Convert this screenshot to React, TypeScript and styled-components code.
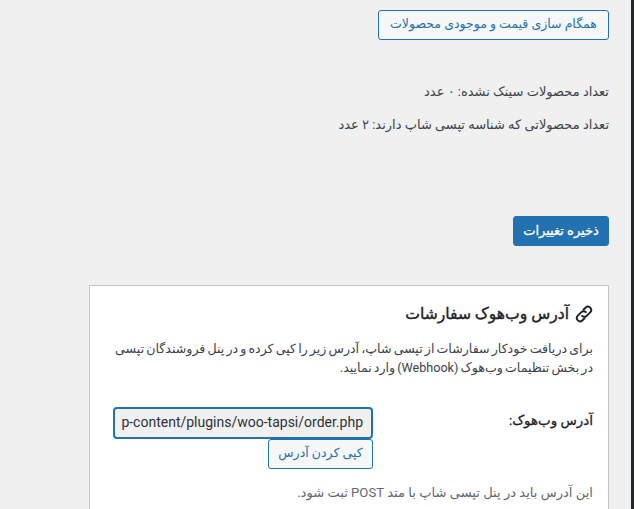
import { createGlobalStyle } from 'styled-components';
import styled from 'styled-components';

const GlobalStyle = createGlobalStyle`
  html, body {
    margin: 0;
    padding: 0;
    height: 100%;
    overflow: hidden;
    background: #f0f0f1;
  }
  body {
    font-family: Roboto, "Noto Sans", "DejaVu Sans", sans-serif;
    font-size: 13px;
    color: #3c434a;
  }
`;

const Page = styled.div`
  display: flex;
  width: 634px;
  height: 509px;
  overflow: hidden;
`;

const Content = styled.main`
  flex: 1;
  direction: rtl;
  padding: 10px 22px 0 0;
  display: flex;
  flex-direction: column;
  align-items: flex-start;
`;

const Edge = styled.div`
  width: 3px;
  background: #23282b;
`;

const OutlineButton = styled.button<{ $width: number }>`
  flex: none;
  width: ${props => props.$width}px;
  height: 30px;
  padding: 0 0 2px;
  font: inherit;
  font-size: 12.5px;
  line-height: 1;
  color: #2271b1;
  background: #f6f7f7;
  border: 1px solid #2271b1;
  border-radius: 3px;
`;

const StatLine = styled.p`
  margin: 0 0 14px;
  font-size: 13px;
  line-height: 19px;
  color: #3c434a;
`;

const Stats = styled.div`
  margin-top: 42px;
`;

const SaveButton = styled.button`
  margin-top: 68px;
  width: 96px;
  height: 30px;
  padding: 0 0 2px;
  font: inherit;
  -webkit-text-stroke: 0.3px #fff;
  color: #fff;
  background: #2271b1;
  border: 1px solid #2271b1;
  border-radius: 3px;
`;

const Card = styled.section`
  box-sizing: border-box;
  margin-top: 39px;
  width: 520px;
  flex: 1;
  padding: 18px 15px 0 23px;
  background: #fff;
  border: 1px solid #c3c4c7;
  border-bottom: 0;
`;

const CardTitle = styled.h2`
  display: flex;
  align-items: center;
  gap: 6px;
  margin: 0;
  font-size: 15.6px;
  line-height: 20px;
  font-weight: 400;
  -webkit-text-stroke: 0.4px #1d2327;
  color: #1d2327;
  svg { flex: none; }
`;

const Lead = styled.p`
  margin: 15px 0 0;
  font-size: 12.6px;
  word-spacing: -1px;
  line-height: 19px;
  color: #3c434a;
`;

const Row = styled.div`
  display: flex;
  justify-content: space-between;
  margin-top: 30px;
`;

const FieldLabel = styled.label`
  font-weight: 400;
  font-size: 13.4px;
  -webkit-text-stroke: 0.3px #1d2327;
  line-height: 27px;
  color: #1d2327;
`;

const Field = styled.div`
  width: 260px;
  display: flex;
  flex-direction: column;
  align-items: flex-start;
`;

const UrlBox = styled.div`
  box-sizing: border-box;
  width: 260px;
  height: 32px;
  padding: 0 8px 2px;
  direction: ltr;
  display: flex;
  align-items: center;
  justify-content: flex-end;
  overflow: hidden;
  white-space: nowrap;
  font-size: 14px;
  color: #2c3338;
  background: #f0f0f1;
  border: 2px solid #2271b1;
  border-radius: 4px;
`;

const Hint = styled.p`
  margin: 14px 0 0;
  font-size: 13.1px;
  line-height: 19px;
  color: #646970;
`;

const LinkIcon = () => (
  <svg width="18" height="18" viewBox="0 0 24 24" fill="none" stroke="#1d2327" strokeWidth="2.6" strokeLinecap="round">
    <path d="M9.5 14.5a4.2 4.2 0 0 0 6 0l5-5a4.4 4.4 0 0 0-6.2-6.2l-3 3" />
    <path d="M14.5 9.5a4.2 4.2 0 0 0-6 0l-5 5a4.4 4.4 0 0 0 6.2 6.2l3-3" />
  </svg>
);

export default function App() {
  return (
    <Page>
      <GlobalStyle />
      <Content>
        <OutlineButton $width={231}>همگام سازی قیمت و موجودی محصولات</OutlineButton>
        <Stats>
          <StatLine>تعداد محصولات سینک نشده: ۰ عدد</StatLine>
          <StatLine>تعداد محصولاتی که شناسه تپسی شاپ دارند: ۲ عدد</StatLine>
        </Stats>
        <SaveButton>ذخیره تغییرات</SaveButton>
        <Card>
          <CardTitle>
            <LinkIcon />
            آدرس وب‌هوک سفارشات
          </CardTitle>
          <Lead>
            برای دریافت خودکار سفارشات از تپسی شاپ، آدرس زیر را کپی کرده و در پنل فروشندگان تپسی در بخش تنظیمات وب‌هوک (Webhook) وارد نمایید.
          </Lead>
          <Row>
            <FieldLabel>آدرس وب‌هوک:</FieldLabel>
            <Field>
              <UrlBox>p-content/plugins/woo-tapsi/order.php</UrlBox>
              <OutlineButton $width={105}>کپی کردن آدرس</OutlineButton>
            </Field>
          </Row>
          <Hint>این آدرس باید در پنل تپسی شاپ با متد POST ثبت شود.</Hint>
        </Card>
      </Content>
      <Edge />
    </Page>
  );
}
